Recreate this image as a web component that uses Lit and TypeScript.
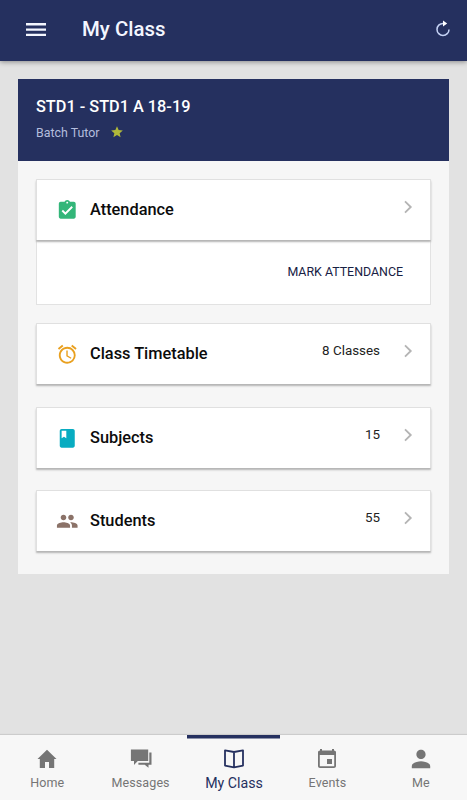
import { LitElement, html, css, svg, nothing } from "lit";
import { customElement, property } from "lit/decorators.js";

const icons: Record<string, unknown> = {
  menu: svg`<path d="M2 19h20v-2.3H2V19zm0-5.3h20v-2.3H2v2.3zm0-7.6v2.3h20V6.1H2z"/>`,
  attendance: svg`<path d="M19 3h-4.18C14.4 1.84 13.3 1 12 1c-1.3 0-2.4.84-2.82 2H5c-1.1 0-2 .9-2 2v14c0 1.1.9 2 2 2h14c1.1 0 2-.9 2-2V5c0-1.1-.9-2-2-2zm-7 0c.55 0 1 .45 1 1s-.45 1-1 1-1-.45-1-1 .45-1 1-1zm-2 14l-4-4 1.41-1.41L10 14.17l6.59-6.59L18 9l-8 8z"/>`,
  alarm: svg`<path d="M22 5.72l-4.6-3.86-1.29 1.53 4.6 3.86L22 5.72zM7.88 3.39L6.6 1.86 2 5.71l1.29 1.53 4.59-3.85zM12.5 8H11v6l4.75 2.85.75-1.23-4-2.37V8zM12 4c-4.97 0-9 4.03-9 9s4.02 9 9 9a9 9 0 1 0 0-18zm0 16c-3.87 0-7-3.13-7-7s3.13-7 7-7 7 3.13 7 7-3.13 7-7 7z"/>`,
  book: svg`<path d="M18 2H6c-1.1 0-2 .9-2 2v16c0 1.1.9 2 2 2h12c1.1 0 2-.9 2-2V4c0-1.1-.9-2-2-2zM6 4h5v8l-2.5-1.5L6 12V4z"/>`,
  people: svg`<path d="M16 11c1.66 0 2.99-1.34 2.99-3S17.66 5 16 5s-3 1.34-3 3 1.34 3 3 3zm-8 0c1.66 0 2.99-1.34 2.99-3S9.66 5 8 5 5 6.34 5 8s1.34 3 3 3zm0 2c-2.33 0-7 1.17-7 3.5V19h14v-2.5c0-2.33-4.67-3.5-7-3.5zm8 0c-.29 0-.62.02-.97.05 1.16.84 1.97 1.97 1.97 3.45V19h6v-2.5c0-2.33-4.67-3.5-7-3.5z"/>`,
  chevron: svg`<path d="M8.4 5.3L15.3 12l-6.9 6.7" fill="none" stroke="currentColor" stroke-width="2.2"/>`,
  star: svg`<path d="M12 17.27L18.18 21l-1.64-7.03L22 9.24l-7.19-.61L12 2 9.19 8.63 2 9.24l5.46 4.73L5.82 21z"/>`,
  refresh: svg`<path d="M13.5 4.5H12a8 8 0 1 0 8 8" fill="none" stroke="currentColor" stroke-width="2"/><path d="M12 .6v8l5.6-4z" fill="#fff"/>`,
  home: svg`<path d="M10 21v-6h4v6h5.2v-9h2.3L12 2.8 2.5 12h2.3v9z"/>`,
  messages: svg`<path d="M1.9 2.4h17.3v11.5H8.8L5 17.9v-4H1.9zM20.3 5.6h2.2v12.2h-3v3l-3.8-3H9.4v-2h10.9z"/>`,
  reader: svg`<path d="M12 5L3 3.3v15.3l9 1.7 9-1.7V3.3zM12 5v15.3" fill="none" stroke="currentColor" stroke-width="1.8" stroke-linejoin="round"/>`,
  events: svg`<path d="M17 12h-5v5h5v-5zM17 2v1.5H7V2H5v1.5c-1.11 0-2 .7-2 1.8V19c0 1.1.89 2 2 2h14c1.1 0 2-.9 2-2V5.3c0-1.1-.9-1.8-2-1.8V2h-2zm2.2 17.2H4.8V8h14.4v11.2z"/>`,
  person: svg`<path transform="translate(-1.8 -1.8) scale(1.15)" d="M12 12c2.21 0 4-1.79 4-4s-1.79-4-4-4-4 1.79-4 4 1.79 4 4 4zm0 2c-2.67 0-8 1.34-8 4v2h16v-2c0-2.66-5.33-4-8-4z"/>`,
};

@customElement("app-icon")
class AppIcon extends LitElement {
  @property() name = "";
  static styles = css`
    :host { display: block; flex: none; width: 24px; height: 24px; }
    svg { display: block; width: 100%; height: 100%; fill: currentColor; }
  `;
  render() {
    return html`<svg viewBox="0 0 24 24" aria-hidden="true">${icons[this.name]}</svg>`;
  }
}

@customElement("class-row")
class ClassRow extends LitElement {
  @property() icon = "";
  @property() label = "";
  @property() value = "";
  static styles = css`
    :host { display: block; position: relative; z-index: 1; }
    .row {
      display: flex; align-items: center; box-sizing: border-box; height: 61px;
      padding: 0 12px 0 19px; background: #fff; border: 1px solid #e0e0e0;
      border-bottom: 0; border-radius: 1px; box-shadow: 0 2px 2px -.5px #b4b4b4;
    }
    .icon { width: 22.5px; height: 22.5px; margin-bottom: .5px; }
    .label { flex: 1; margin-left: 11.5px; font-size: 16.35px; font-weight: 500; line-height: 22px; color: #0c0c0c; }
    .value { margin: 0 18px 6px 0; font-size: 13.4px; line-height: 18px; letter-spacing: 0; color: #222; }
    .chevron { width: 20px; height: 20px; margin: 0 0 6px; color: #b4b4b4; }
    .attendance { color: #33b679; }
    .alarm { color: #e9a01f; }
    .book { color: #08acc1; }
    .people { color: #8b7268; }
  `;
  render() {
    return html`<div class="row">
      <app-icon class="icon ${this.icon}" name=${this.icon}></app-icon>
      <span class="label">${this.label}</span>
      ${this.value ? html`<span class="value">${this.value}</span>` : nothing}
      <app-icon class="chevron" name="chevron"></app-icon>
    </div>`;
  }
}

const tabs = [
  { icon: "home", label: "Home" },
  { icon: "messages", label: "Messages" },
  { icon: "reader", label: "My Class", active: true },
  { icon: "events", label: "Events" },
  { icon: "person", label: "Me" },
];

@customElement("app-root")
class AppRoot extends LitElement {
  static styles = css`
    :host {
      display: flex; flex-direction: column; height: 100vh; overflow: hidden;
      background: #e2e2e2; font-family: Roboto, "Liberation Sans", sans-serif;
    }
    .bar {
      display: flex; align-items: center; flex: none; box-sizing: border-box; height: 61px;
      padding: 0 15px 3px 24px; background: #25305f; color: #f4f6ff;
      box-shadow: 0 1px 5px rgba(0, 0, 0, .4);
    }
    .menu { width: 24px; height: 24px; }
    .title { flex: 1; margin: 0 0 0 34px; font-size: 20.4px; font-weight: 500; line-height: 26px; }
    .refresh { width: 18px; height: 18px; color: #c5d2f5; }
    main { flex: 1; padding: 18px 18px 0; }
    .card { width: 431px; background: #f6f6f6; }
    .head { box-sizing: border-box; height: 82px; padding: 18px 18px 0; background: #25305f; color: #fff; }
    .batch { margin: 0; font-size: 16.3px; line-height: 20px; font-weight: 500; }
    .role { display: flex; align-items: center; margin-top: 7px; font-size: 12.4px; line-height: 18px; color: #b4bddd; }
    .star { width: 14px; height: 14px; margin: -3px 0 0 10px; color: #b0b83a; }
    .list { display: flex; flex-direction: column; padding: 18px 18px 23px; }
    .item { margin-bottom: 22px; }
    .item.first { margin-bottom: 23px; }
    .item.last { margin-bottom: 0; }
    .group { margin-bottom: 18px; }
    .action {
      display: flex; align-items: center; justify-content: flex-end; box-sizing: border-box; height: 65px;
      padding: 0 27px 2px 0; background: #fff; border: 1px solid #e2e2e2; border-top: 0;
      font-size: 12.4px; font-weight: 400; color: #182144;
    }
    nav {
      display: grid; grid-template-columns: repeat(5, 1fr); flex: none; box-sizing: border-box;
      height: 65px; background: #f7f7f7; box-shadow: 0 -1px 1px #ccc;
    }
    .tab { display: flex; flex-direction: column; align-items: center; padding: 12px 0 0 1px; color: #757575; }
    .tab span { margin-top: 3px; font-size: 12.5px; line-height: 17px; letter-spacing: .1px; }
    .tab.active { color: #25305f; box-shadow: inset 0 3.5px #25305f; }
    .tab.active span { margin-top: 4px; font-size: 14.2px; letter-spacing: 0; }
  `;
  render() {
    return html`
      <header class="bar">
        <app-icon class="menu" name="menu"></app-icon>
        <h1 class="title">My Class</h1>
        <app-icon class="refresh" name="refresh"></app-icon>
      </header>
      <main>
        <section class="card">
          <div class="head">
            <h2 class="batch">STD1 - STD1 A 18-19</h2>
            <div class="role">Batch Tutor<app-icon class="star" name="star"></app-icon></div>
          </div>
          <div class="list">
            <div class="group">
              <class-row icon="attendance" label="Attendance"></class-row>
              <div class="action">MARK ATTENDANCE</div>
            </div>
            <class-row class="item first" icon="alarm" label="Class Timetable" value="8 Classes"></class-row>
            <class-row class="item" icon="book" label="Subjects" value="15"></class-row>
            <class-row class="item last" icon="people" label="Students" value="55"></class-row>
          </div>
        </section>
      </main>
      <nav>
        ${tabs.map((t) => html`<div class=${t.active ? "tab active" : "tab"}>
          <app-icon name=${t.icon}></app-icon><span>${t.label}</span>
        </div>`)}
      </nav>
    `;
  }
}
